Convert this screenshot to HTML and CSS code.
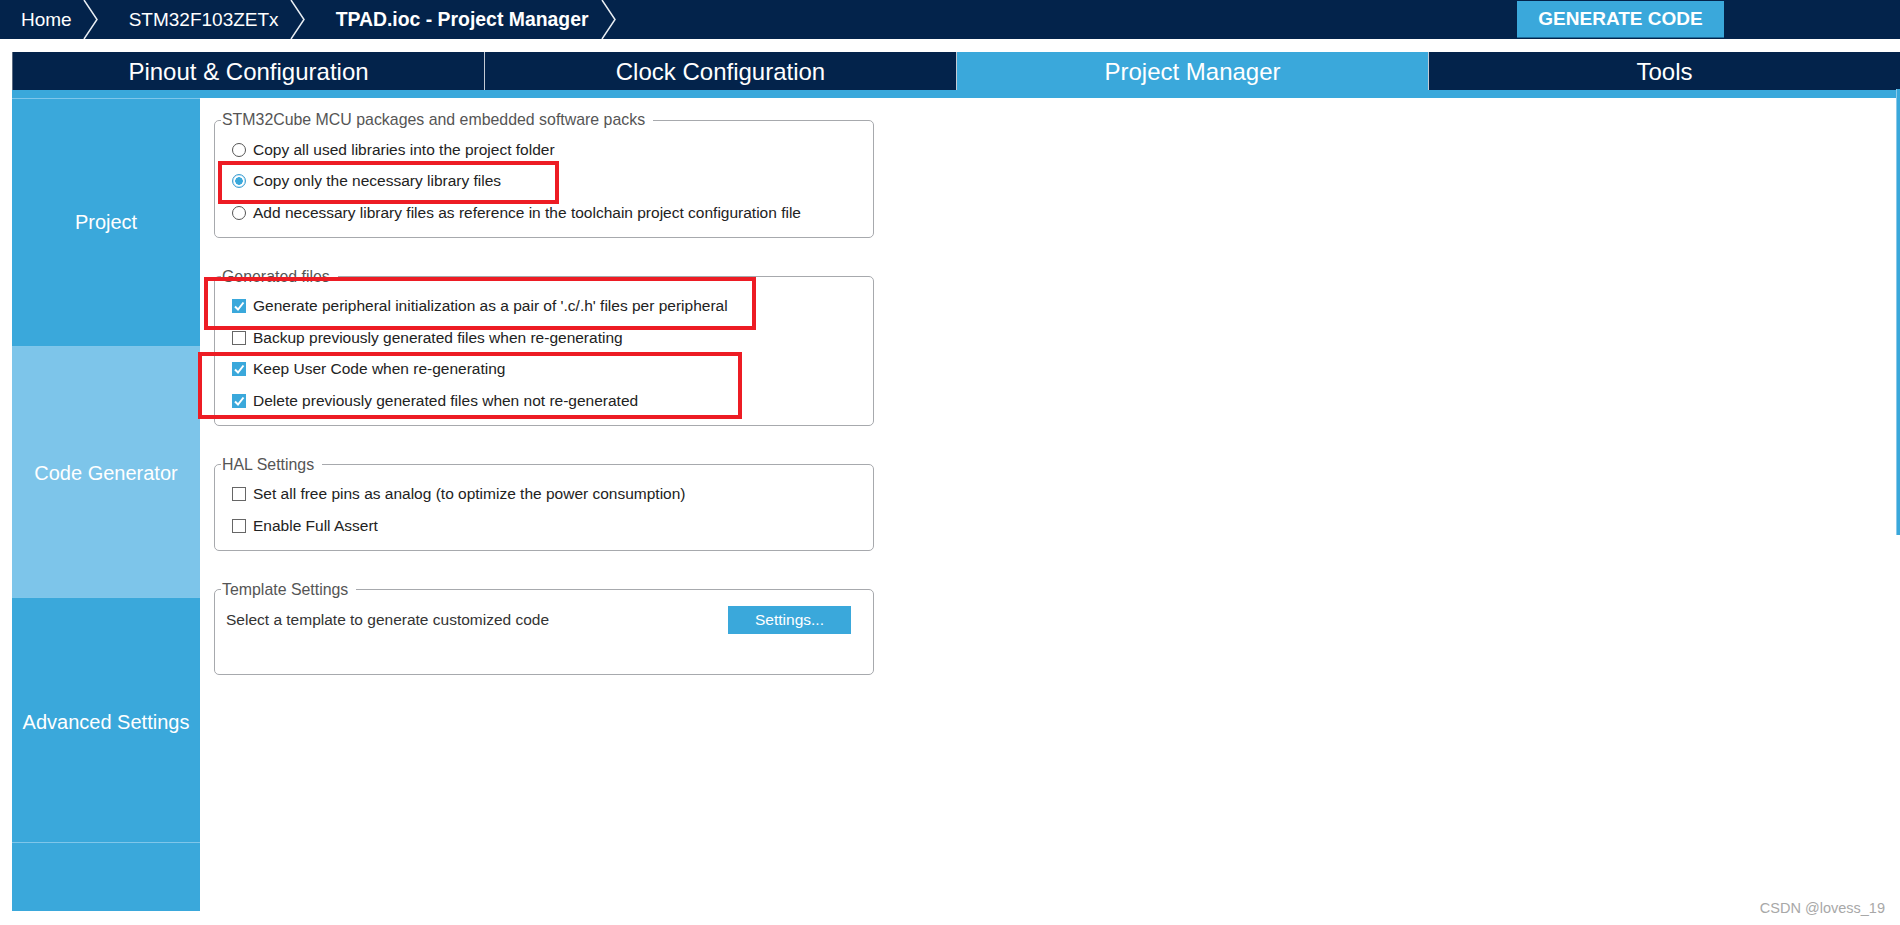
FILE: index.html
```html
<!DOCTYPE html>
<html lang="en">
<head>
  <meta charset="UTF-8" />
  <title>TPAD.ioc - Project Manager</title>
  <link rel="stylesheet" href="styles.css">
</head>
<body>

  <div class="topbar">
    <nav class="crumbs">
      <span class="crumb">Home</span>
      <svg class="chevron" viewBox="0 0 15 39"><polyline points="1,0 14,19.5 1,39" /></svg>
      <span class="crumb">STM32F103ZETx</span>
      <svg class="chevron" viewBox="0 0 15 39"><polyline points="1,0 14,19.5 1,39" /></svg>
      <span class="crumb current">TPAD.ioc - Project Manager</span>
      <svg class="chevron" viewBox="0 0 15 39"><polyline points="1,0 14,19.5 1,39" /></svg>
    </nav>
    <button class="generate">GENERATE CODE</button>
  </div>

  <div class="tabs">
    <div class="tab first">Pinout &amp; Configuration</div>
    <div class="tab">Clock Configuration</div>
    <div class="tab active">Project Manager</div>
    <div class="tab">Tools</div>
  </div>
  <div class="tab-strip"></div>

  <div class="main">
    <aside class="sidebar">
      <div class="side-item project">Project</div>
      <div class="side-item active">Code Generator</div>
      <div class="side-item advanced">Advanced Settings</div>
      <div class="side-item rest"></div>
    </aside>

    <section class="content">
      <fieldset class="group">
        <legend>STM32Cube MCU packages and embedded software packs</legend>
        <label class="option"><span class="radio"></span>Copy all used libraries into the project folder</label>
        <label class="option"><span class="radio on"></span>Copy only the necessary library files</label>
        <label class="option"><span class="radio"></span>Add necessary library files as reference in the toolchain project configuration file</label>
      </fieldset>

      <fieldset class="group">
        <legend>Generated files</legend>
        <label class="option"><span class="check on"><svg viewBox="0 0 14 14"><polyline points="3,7.5 6,10.5 11.5,3.5" /></svg></span>Generate peripheral initialization as a pair of '.c/.h' files per peripheral</label>
        <label class="option"><span class="check"></span>Backup previously generated files when re-generating</label>
        <label class="option"><span class="check on"><svg viewBox="0 0 14 14"><polyline points="3,7.5 6,10.5 11.5,3.5" /></svg></span>Keep User Code when re-generating</label>
        <label class="option"><span class="check on"><svg viewBox="0 0 14 14"><polyline points="3,7.5 6,10.5 11.5,3.5" /></svg></span>Delete previously generated files when not re-generated</label>
      </fieldset>

      <fieldset class="group">
        <legend>HAL Settings</legend>
        <label class="option"><span class="check"></span>Set all free pins as analog (to optimize the power consumption)</label>
        <label class="option"><span class="check"></span>Enable Full Assert</label>
      </fieldset>

      <fieldset class="group template">
        <legend>Template Settings</legend>
        <div class="template-row">
          <span>Select a template to generate customized code</span>
          <button class="settings-btn">Settings...</button>
        </div>
      </fieldset>

      <!-- annotation boxes drawn over the form -->
      <div class="mark mark-1"></div>
      <div class="mark mark-2"></div>
      <div class="mark mark-3"></div>

      <div class="scroll-thumb"></div>
    </section>
  </div>

  <div class="watermark">CSDN @lovess_19</div>

</body>
</html>
```

FILE: styles.css
```css
* {
  box-sizing: border-box;
}

body {
  margin: 0;
  height: 925px;
  overflow: hidden;
  position: relative;
  background: #fff;
  color: #222;
  font-family: "Liberation Sans", Arial, sans-serif;
}

/* top breadcrumb bar */
.topbar {
  display: flex;
  align-items: center;
  height: 39px;
  background: #03234b;
}

.crumbs {
  display: flex;
  align-items: center;
  height: 100%;
  padding-left: 21px;
}

.crumb {
  color: #fff;
  font-size: 19px;
  margin-right: 11px;
}

.crumb.current {
  font-weight: bold;
  font-size: 19.4px;
  margin-right: 13px;
}

.chevron {
  width: 15px;
  height: 39px;
  margin-right: 31px;
}

.chevron polyline {
  fill: none;
  stroke: #e8edf3;
  stroke-width: 1.5;
}

.generate {
  margin-left: auto;
  margin-right: 176px;
  width: 207px;
  height: 37px;
  padding: 0;
  background: #3aa8db;
  color: #fff;
  border: none;
  border-bottom: 1px solid #1d6a99;
  font-family: "Liberation Sans", Arial, sans-serif;
  font-size: 19px;
  font-weight: bold;
}

/* main tabs */
.tabs {
  display: flex;
  height: 38px;
  margin: 13px 0 0 12px;
  background: #03234b;
}

.tab {
  flex: 1;
  display: flex;
  align-items: center;
  justify-content: center;
  padding-top: 1px;
  color: #fff;
  font-size: 24px;
  border-left: 1px solid #c3cad4;
}

.tab.first {
  border-left-color: #5a6a80;
}

.tab.active {
  background: #3aa8db;
}

.tab-strip {
  height: 8px;
  margin-left: 12px;
  background: #3aa8db;
}

/* body */
.main {
  display: flex;
  height: 813px;
  margin-left: 12px;
}

.sidebar {
  width: 188px;
  display: flex;
  flex-direction: column;
  background: #3aa8db;
}

.side-item {
  height: 251px;
  display: flex;
  align-items: center;
  justify-content: center;
  color: #fff;
  font-size: 20px;
  border-top: 1px solid #7fc6ea;
}

.side-item.project {
  height: 248px;
}

.side-item.advanced {
  height: 245px;
  padding-top: 5px;
}

.side-item.active {
  background: #7dc5ea;
  padding-top: 3px;
}

.side-item.rest {
  flex: 1;
  height: auto;
}

.content {
  flex: 1;
  position: relative;
  padding: 13px 0 0 14px;
}

.group {
  width: 660px;
  margin: 0 0 30px;
  padding: 5px 11px 8px;
  border: 1px solid #a7a9ad;
  border-radius: 5px;
}

.group legend {
  margin-left: -5px;
  padding: 0 8px 0 1px;
  font-size: 15.9px;
  line-height: 18px;
  color: #555;
}

.option {
  display: flex;
  align-items: center;
  height: 31.5px;
  padding-left: 6px;
  font-size: 15.5px;
  color: #222;
}

.radio,
.check {
  flex: none;
  width: 14px;
  height: 14px;
  margin-right: 7px;
  background: #fff;
}

.radio {
  border: 1px solid #555;
  border-radius: 50%;
}

.radio.on {
  border-color: #3e9fd2;
  background: radial-gradient(circle, #3aa8db 0 3.5px, #fff 4px 5px, #cfe8f6 5.5px);
}

.check {
  border: 1px solid #666;
}

.check.on {
  border: none;
  background: #3aa8db;
}

.check svg {
  display: block;
  width: 14px;
  height: 14px;
}

.check polyline {
  fill: none;
  stroke: #fff;
  stroke-width: 2;
}

.group.template {
  padding: 7px 11px 40px;
}

.template-row {
  display: flex;
  align-items: center;
  font-size: 15.5px;
  color: #333;
}

.settings-btn {
  margin-left: auto;
  margin-right: 11px;
  width: 123px;
  height: 28px;
  padding: 0;
  border: none;
  background: #3aa8db;
  color: #fff;
  font-family: "Liberation Sans", Arial, sans-serif;
  font-size: 15.5px;
}

/* red annotation boxes */
.mark {
  position: absolute;
  border: 4px solid #ed1c24;
}

.mark-1 {
  left: 18px;
  top: 63px;
  width: 341px;
  height: 43px;
}

.mark-2 {
  left: 4px;
  top: 179px;
  width: 552px;
  height: 53px;
}

.mark-3 {
  left: -2px;
  top: 254px;
  width: 544px;
  height: 67px;
}

.scroll-thumb {
  position: absolute;
  right: 0;
  top: -9px;
  width: 4px;
  height: 446px;
  background: #3aa8db;
  border-left: 1px solid #8cc9ea;
}

.watermark {
  position: absolute;
  right: 15px;
  bottom: 9px;
  font-size: 14.5px;
  color: #a8a8a8;
}
```
